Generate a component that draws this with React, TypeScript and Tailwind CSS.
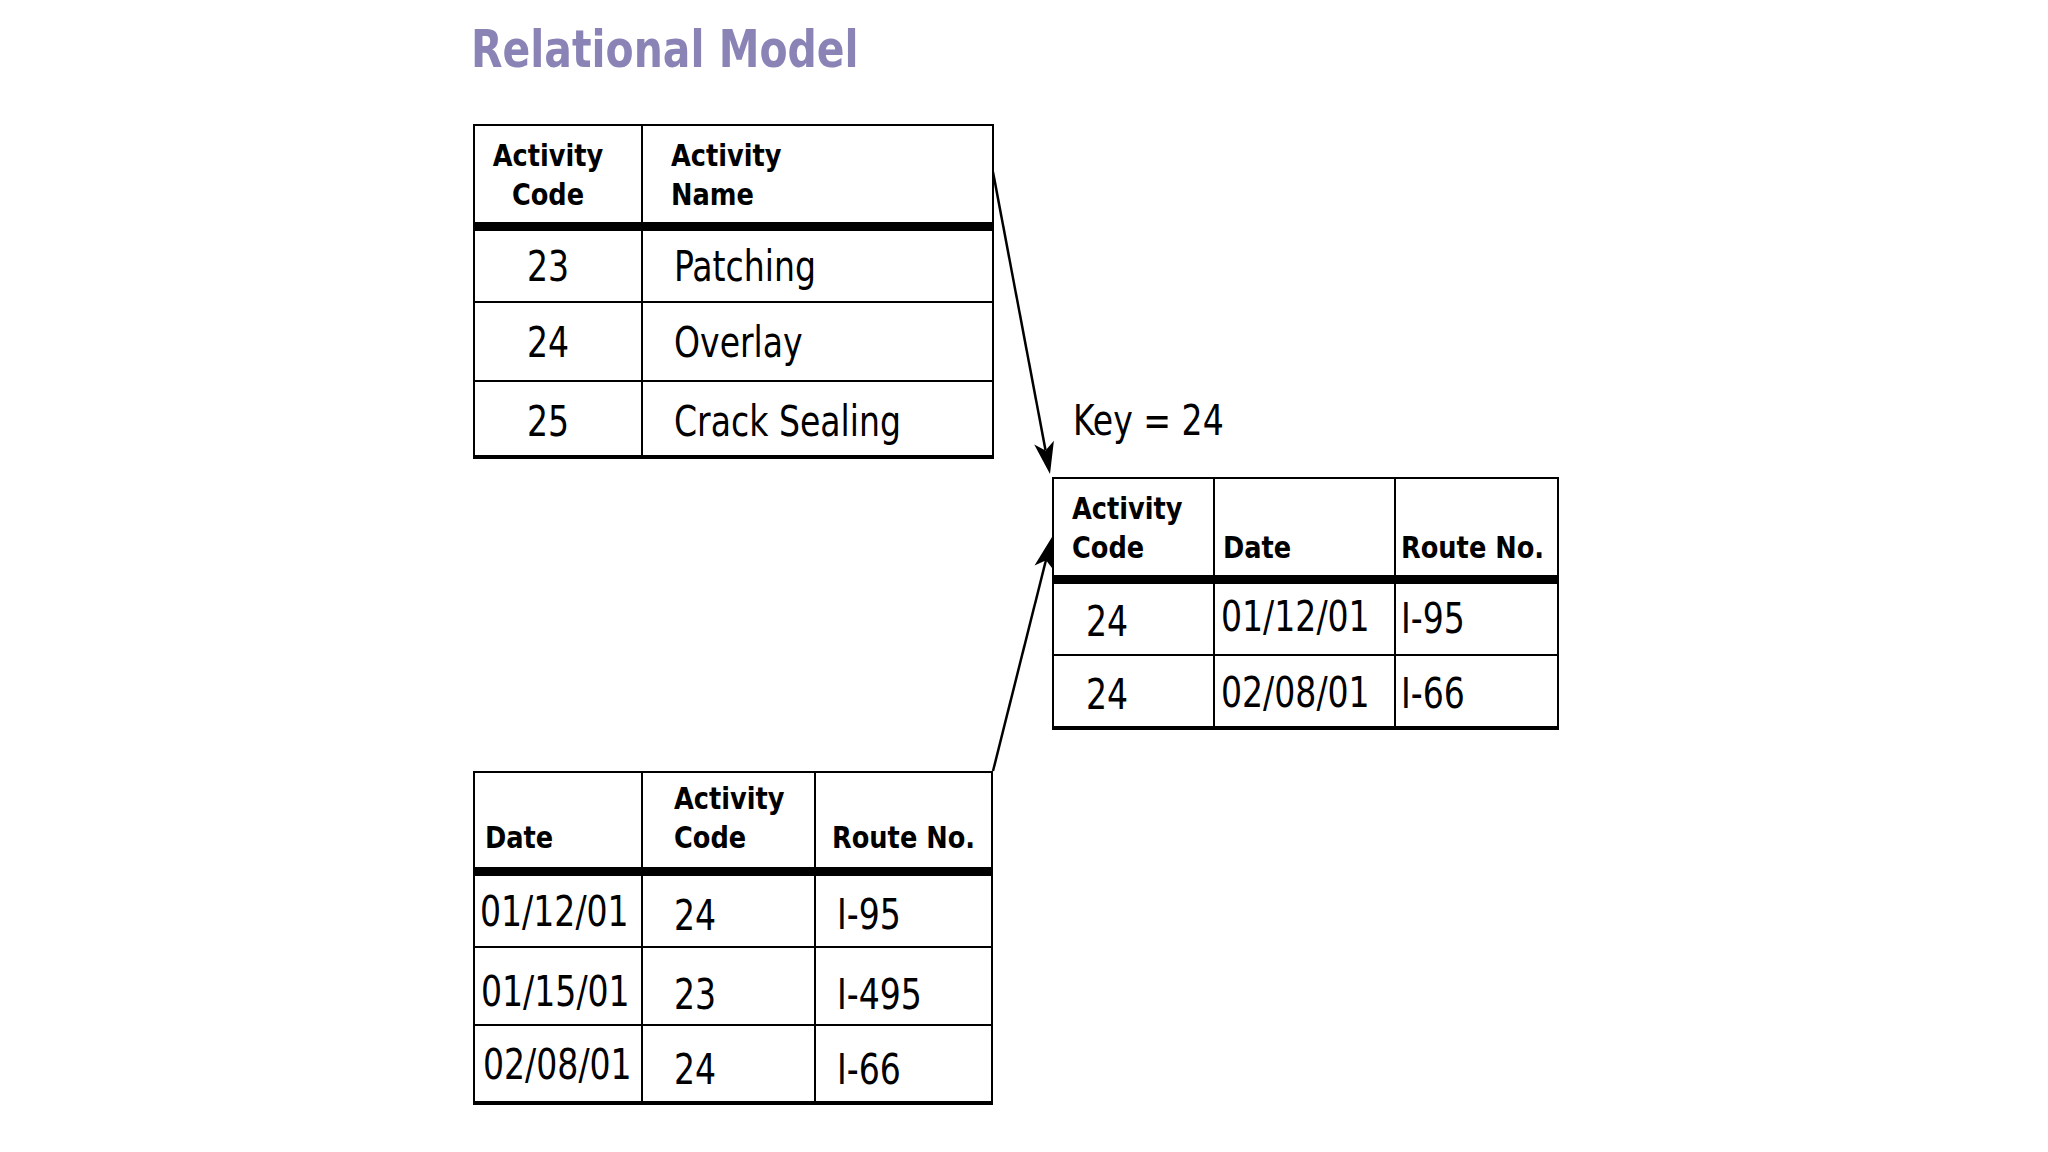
import React from 'react';
import clsx from 'clsx';

// -----------------------------------------------------------------------------
// Cells
// -----------------------------------------------------------------------------

// Header cell: bold lines sitting on the thick 9px rule.
const Head: React.FC<{ lines: string[]; className?: string }> = ({ lines, className }) => (
  <div className={clsx('flex flex-col justify-end border-b-[9px] border-black', className)}>
    {lines.map((line) => (
      <span
        key={line}
        className="block origin-[50%_75%] scale-y-[1.08] text-[28.5px] leading-[39px] font-bold whitespace-nowrap"
      >
        {line}
      </span>
    ))}
  </div>
);

// Body cell: the slide's text is tall and narrow, so stretch it a little.
const Val: React.FC<{ children: React.ReactNode; className?: string }> = ({
  children,
  className,
}) => (
  <div className={clsx('border-black', className)}>
    <span className="inline-block origin-[50%_85%] scale-y-[1.17] text-[36.8px] leading-[36px] whitespace-nowrap">
      {children}
    </span>
  </div>
);

// -----------------------------------------------------------------------------
// Tables
// -----------------------------------------------------------------------------

const ActivityTable = () => (
  <div className="relative grid w-[521px] grid-cols-[168px_349px] border-2 border-b-4 border-black bg-white">
    <Head lines={['Activity', 'Code']} className="h-[105px] items-center border-r-2 pr-[20px] pb-[7px]" />
    <Head lines={['Activity', 'Name']} className="h-[105px] pl-[28px] pb-[7px]" />

    <Val className="h-[72px] border-r-2 border-b-2 pt-[20px] pr-[20px] text-center">23</Val>
    <Val className="h-[72px] border-b-2 pt-[20px] pl-[31px]">Patching</Val>

    <Val className="h-[79px] border-r-2 border-b-2 pt-[24px] pr-[20px] text-center">24</Val>
    <Val className="h-[79px] border-b-2 pt-[24px] pl-[31px]">Overlay</Val>

    <Val className="h-[73px] border-r-2 pt-[24px] pr-[20px] text-center">25</Val>
    <Val className="h-[73px] pt-[24px] pl-[31px]">Crack Sealing</Val>
  </div>
);

const KeyTable = () => (
  <div className="relative grid w-[507px] grid-cols-[161px_181px_161px] border-2 border-b-4 border-black bg-white">
    <Head lines={['Activity', 'Code']} className="h-[105px] border-r-2 pl-[18px] pb-[7px]" />
    <Head lines={['Date']} className="h-[105px] border-r-2 pl-[8px] pb-[7px]" />
    <Head lines={['Route No.']} className="h-[105px] pl-[5px] pb-[7px]" />

    <Val className="h-[72px] border-r-2 border-b-2 pt-[22px] pl-[32px]">24</Val>
    <Val className="h-[72px] border-r-2 border-b-2 pt-[17px] pl-[6px]">01/12/01</Val>
    <Val className="h-[72px] border-b-2 pt-[19px] pl-[5px]">I-95</Val>

    <Val className="h-[70px] border-r-2 pt-[23px] pl-[32px]">24</Val>
    <Val className="h-[70px] border-r-2 pt-[21px] pl-[6px]">02/08/01</Val>
    <Val className="h-[70px] pt-[22px] pl-[5px]">I-66</Val>
  </div>
);

const WorkTable = () => (
  <div className="relative grid w-[520px] grid-cols-[168px_173px_175px] border-2 border-b-4 border-black bg-white">
    <Head lines={['Date']} className="h-[103px] border-r-2 pl-[10px] pb-[9px]" />
    <Head lines={['Activity', 'Code']} className="h-[103px] border-r-2 pl-[31px] pb-[9px]" />
    <Head lines={['Route No.']} className="h-[103px] pl-[16px] pb-[9px]" />

    <Val className="h-[72px] border-r-2 border-b-2 pt-[20px] pl-[5px]">01/12/01</Val>
    <Val className="h-[72px] border-r-2 border-b-2 pt-[24px] pl-[31px]">24</Val>
    <Val className="h-[72px] border-b-2 pt-[23px] pl-[21px]">I-95</Val>

    <Val className="h-[78px] border-r-2 border-b-2 pt-[28px] pl-[6px]">01/15/01</Val>
    <Val className="h-[78px] border-r-2 border-b-2 pt-[31px] pl-[31px]">23</Val>
    <Val className="h-[78px] border-b-2 pt-[31px] pl-[21px]">I-495</Val>

    <Val className="h-[75px] border-r-2 pt-[23px] pl-[8px]">02/08/01</Val>
    <Val className="h-[75px] border-r-2 pt-[28px] pl-[31px]">24</Val>
    <Val className="h-[75px] pt-[28px] pl-[21px]">I-66</Val>
  </div>
);

// -----------------------------------------------------------------------------
// Arrows
// -----------------------------------------------------------------------------

// Both arrows end in a barbed, filled head (length 32, half-width 10).
const Arrows = () => (
  <svg className="pointer-events-none absolute inset-0" width={2048} height={1152}>
    <line x1={993} y1={172} x2={1045.5} y2={450} stroke="black" strokeWidth={2.5} />
    <polygon points="1050,474 1034.2,444.4 1045.5,450.4 1053.9,440.7" fill="black" />

    <line x1={993} y1={771} x2={1046} y2={560} stroke="black" strokeWidth={2.5} />
    <polygon points="1052,537 1053.9,570.5 1046.1,560.3 1034.5,565.6" fill="black" />
  </svg>
);

// -----------------------------------------------------------------------------
// Page
// -----------------------------------------------------------------------------

export default function App() {
  return (
    <div className="relative h-[1152px] w-[2048px] overflow-hidden bg-white font-['DejaVu_Sans_Condensed','DejaVu_Sans',sans-serif] text-black">
      <Arrows />
      <div className="relative pt-[27px] pl-[473px]">
        <h1 className="-ml-[2px] h-[56px] origin-[0_80%] scale-y-[1.14] text-[45.5px] leading-[52px] font-bold text-[#8a84b6]">
          Relational Model
        </h1>
        <div className="flex">
          <div className="flex w-[521px] flex-col">
            <div className="mt-[41px]">
              <ActivityTable />
            </div>
            <div className="mt-[312px]">
              <WorkTable />
            </div>
          </div>
          <div className="ml-[58px] flex flex-col">
            <div className="mt-[322px] pl-[21px]">
              <span className="inline-block origin-[50%_85%] scale-y-[1.17] text-[36.8px] leading-[36px]">
                Key = 24
              </span>
            </div>
            <div className="mt-[35px]">
              <KeyTable />
            </div>
          </div>
        </div>
      </div>
    </div>
  );
}
